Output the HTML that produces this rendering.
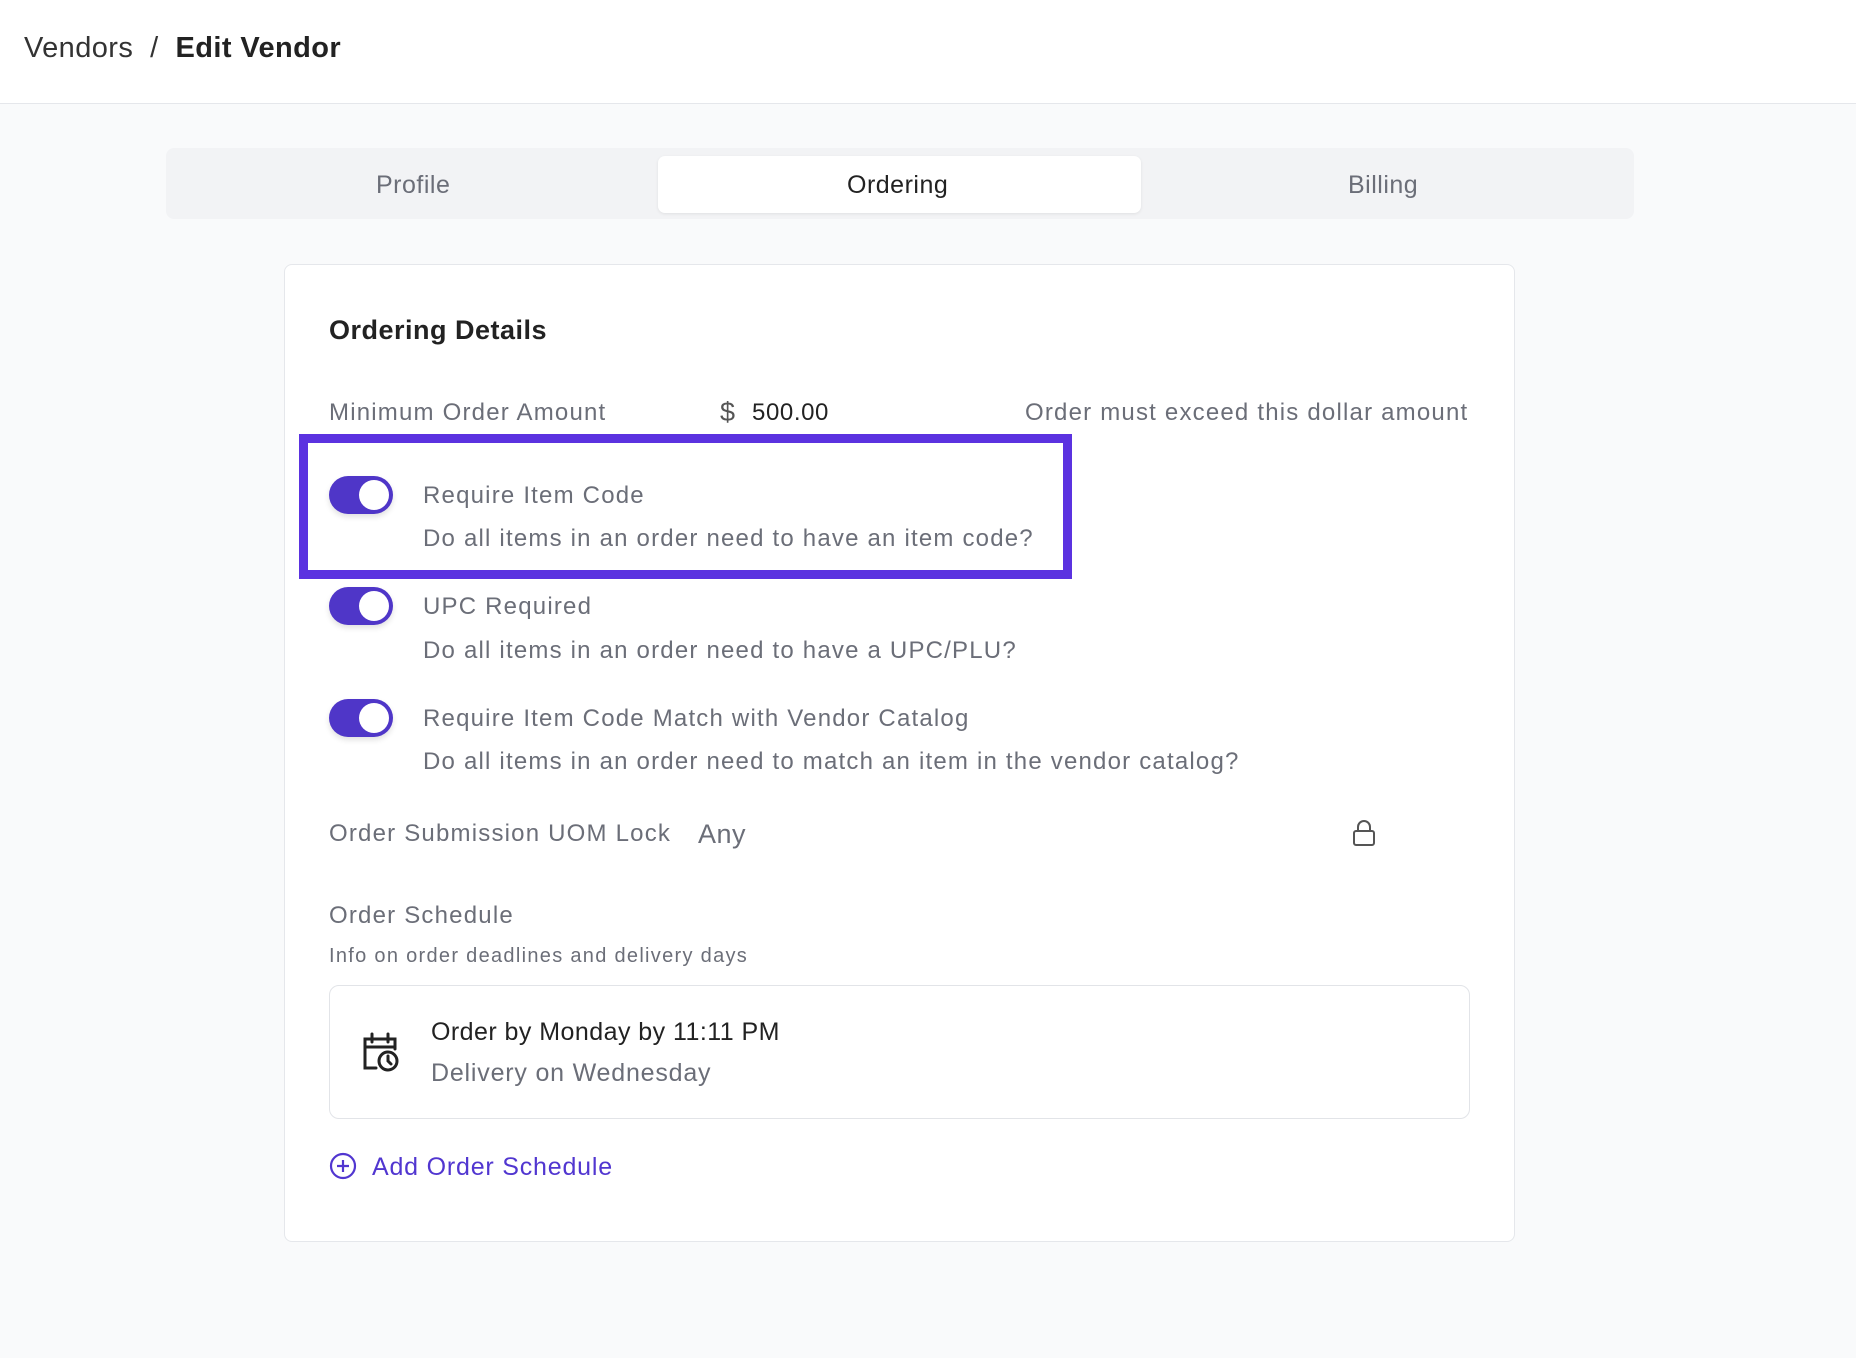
<!DOCTYPE html>
<html><head><style>
*{box-sizing:border-box;margin:0;padding:0}
body{width:1856px;height:1358px;background:#f9fafb;font-family:"Liberation Sans",sans-serif;position:relative;overflow:hidden;color:#6b6e78}
.a{position:absolute;white-space:nowrap;line-height:1}
.hdr{position:absolute;left:0;top:0;width:1856px;height:104px;background:#fff;border-bottom:1px solid #e5e7eb}
.tabs{position:absolute;left:166px;top:148px;width:1468px;height:71px;background:#f2f3f5;border-radius:8px}
.act{position:absolute;left:658px;top:156px;width:483px;height:57px;background:#fff;border-radius:7px;box-shadow:0 1px 3px rgba(0,0,0,.08)}
.card{position:absolute;left:284px;top:264px;width:1231px;height:978px;background:#fff;border:1px solid #e5e7eb;border-radius:8px}
.tg{position:absolute;left:329px;width:64px;height:38px;border-radius:19px;background:#4f36c8;box-shadow:0 3px 6px rgba(0,0,0,.12)}
.tg::after{content:"";position:absolute;right:4px;top:4px;width:30px;height:30px;border-radius:50%;background:#fff}
.t{font-size:24px;color:#6b6e78;letter-spacing:1.2px}
</style></head><body>
<div class="hdr"></div>
<div class="a" style="left:24px;top:34px;font-size:29px;color:#333;letter-spacing:.4px">Vendors &nbsp;/ &nbsp;<b style="color:#222">Edit Vendor</b></div>
<div class="tabs"></div><div class="act"></div>
<div class="a t" style="left:376px;top:173px;font-size:25px;letter-spacing:.5px">Profile</div>
<div class="a" style="left:847px;top:173px;font-size:25px;color:#222;letter-spacing:.5px">Ordering</div>
<div class="a t" style="left:1348px;top:173px;font-size:25px;letter-spacing:.5px">Billing</div>
<div class="card"></div>
<div class="a" style="left:329px;top:317px;font-size:27px;font-weight:bold;color:#222;letter-spacing:.5px">Ordering Details</div>
<div class="a t" style="left:329px;top:401px">Minimum Order Amount</div>
<div class="a" style="left:720px;top:399px;font-size:27px;color:#555">$</div>
<div class="a" style="left:752px;top:401px;font-size:24px;color:#222;letter-spacing:.6px">500.00</div>
<div class="a t" style="left:1025px;top:401px">Order must exceed this dollar amount</div>
<div style="position:absolute;left:299px;top:434px;width:773px;height:145px;border:9px solid #5b32e0"></div>
<div class="tg" style="top:476px"></div>
<div class="a t" style="left:423px;top:484px">Require Item Code</div>
<div class="a t" style="left:423px;top:527px">Do all items in an order need to have an item code?</div>
<div class="tg" style="top:587px"></div>
<div class="a t" style="left:423px;top:595px">UPC Required</div>
<div class="a t" style="left:423px;top:639px">Do all items in an order need to have a UPC/PLU?</div>
<div class="tg" style="top:699px"></div>
<div class="a t" style="left:423px;top:707px">Require Item Code Match with Vendor Catalog</div>
<div class="a t" style="left:423px;top:750px">Do all items in an order need to match an item in the vendor catalog?</div>
<div class="a t" style="left:329px;top:822px">Order Submission UOM Lock</div>
<div class="a" style="left:698px;top:821px;font-size:27px;color:#6b6e78;letter-spacing:.5px">Any</div>
<svg class="a" style="left:1351px;top:819px" width="26" height="28" viewBox="0 0 26 28" fill="none" stroke="#555" stroke-width="2"><rect x="3" y="12" width="20" height="14" rx="2"/><path d="M7 12V8a6 6 0 0 1 12 0v4"/></svg>
<div class="a t" style="left:329px;top:904px">Order Schedule</div>
<div class="a" style="left:329px;top:946px;font-size:20px;color:#6b6e78;letter-spacing:1.3px">Info on order deadlines and delivery days</div>
<div style="position:absolute;left:329px;top:985px;width:1141px;height:134px;border:1px solid #e2e4e8;border-radius:10px;background:#fff"></div>
<svg class="a" style="left:359px;top:1030px" width="44" height="44" viewBox="0 0 44 44" fill="none" stroke="#222" stroke-width="3" stroke-linecap="round"><path d="M17 38H6V9h30v10M6 17h30M13 4v8M29 4v8"/><circle cx="29" cy="31" r="9"/><path d="M29 26v5l3 3"/></svg>
<div class="a" style="left:431px;top:1020px;font-size:25px;color:#222;letter-spacing:.45px">Order by Monday by 11:11 PM</div>
<div class="a" style="left:431px;top:1061px;font-size:25px;color:#6b6e78;letter-spacing:.8px">Delivery on Wednesday</div>
<svg class="a" style="left:329px;top:1152px" width="28" height="28" viewBox="0 0 28 28" fill="none" stroke="#5136d0" stroke-width="2.2"><circle cx="14" cy="14" r="12"/><path d="M14 8v12M8 14h12"/></svg>
<div class="a" style="left:372px;top:1155px;font-size:25px;color:#5136d0;letter-spacing:.8px">Add Order Schedule</div>
</body></html>
